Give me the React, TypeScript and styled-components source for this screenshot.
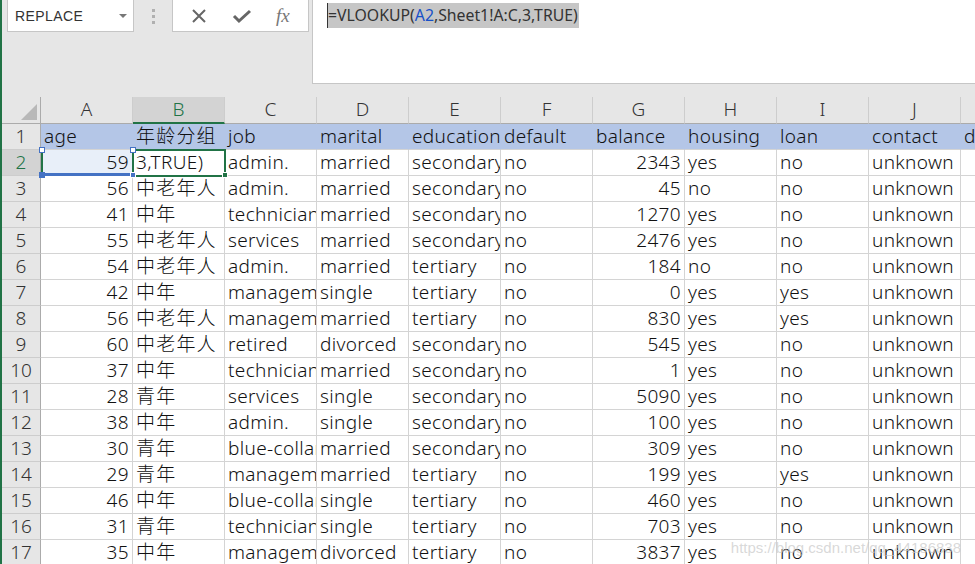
import React from 'react';
import styled, { createGlobalStyle } from 'styled-components';

const GlobalStyle = createGlobalStyle`
  html, body {
    margin: 0;
    padding: 0;
    background: #ffffff;
    overflow: hidden;
  }
  * {
    box-sizing: border-box;
  }
`;

const Frame = styled.div`
  width: 975px;
  height: 564px;
  border-left: 2px solid #217346;
  background: #e6e6e6;
  display: flex;
  flex-direction: column;
  overflow: hidden;
  position: relative;
  font-family: "Noto Sans", "Noto Sans CJK SC", sans-serif;
`;

const TopBar = styled.div`
  display: flex;
  align-items: flex-start;
  height: 97px;
  flex-shrink: 0;
`;

const NameBox = styled.div`
  margin-left: 5px;
  width: 127px;
  height: 32px;
  background: #fff;
  border: 1px solid #c6c6c6;
  border-top: none;
  display: flex;
  align-items: center;
  justify-content: space-between;
  padding: 0 6px 0 7px;
  font-family: "Liberation Sans", sans-serif;
  font-size: 14px;
  letter-spacing: 0.4px;
  color: #333;
`;

const DropArrow = styled.span`
  width: 0;
  height: 0;
  border-left: 4px solid transparent;
  border-right: 4px solid transparent;
  border-top: 4px solid #777;
`;

const Grip = styled.div`
  width: 38px;
  height: 32px;
  display: flex;
  flex-direction: column;
  align-items: center;
  justify-content: center;
  gap: 3px;
  span {
    width: 3px;
    height: 3px;
    background: #b0b0b0;
  }
`;

const FxBox = styled.div`
  width: 137px;
  height: 32px;
  background: #fff;
  border: 1px solid #c6c6c6;
  border-top: none;
  display: flex;
  align-items: center;
  justify-content: space-around;
  padding: 0 6px;
  color: #666;
`;

const FxLabel = styled.span`
  font-family: "Liberation Serif", serif;
  font-style: italic;
  font-size: 19px;
  color: #777;
`;

const FormulaBar = styled.div`
  margin-left: 3px;
  flex: 1;
  height: 84px;
  background: #fff;
  border-left: 1px solid #c6c6c6;
  border-bottom: 1px solid #c6c6c6;
  padding: 3px 0 0 14px;
`;

const FormulaText = styled.span`
  display: inline-block;
  height: 25px;
  line-height: 25px;
  background: #c6c6c6;
  border-left: 1px solid #333;
  padding-right: 1px;
  font-size: 15.8px;
  color: #333;
  white-space: nowrap;
`;

const RefText = styled.span`
  color: #1650c8;
`;

const Sheet = styled.div`
  position: relative;
  display: grid;
  grid-template-columns: 39px repeat(11, 92px);
  grid-template-rows: 27px;
  grid-auto-rows: 26px;
  background: #fff;
`;

const Corner = styled.div`
  position: relative;
  background: #e6e6e6;
  border-right: 1px solid #ababab;
  border-bottom: 1px solid #ababab;
  &::after {
    content: '';
    position: absolute;
    right: 3px;
    bottom: 3px;
    width: 0;
    height: 0;
    border-left: 16px solid transparent;
    border-bottom: 16px solid #b8b8b8;
  }
`;

const ColHead = styled.div<{ $active?: boolean }>`
  background: ${p => (p.$active ? '#d3d3d3' : '#e6e6e6')};
  border-right: 1px solid #cdcdcd;
  border-bottom: ${p => (p.$active ? '2px solid #217346' : '1px solid #ababab')};
  color: ${p => (p.$active ? '#217346' : '#333')};
  font-size: 19px;
  font-weight: 300;
  display: flex;
  align-items: center;
  justify-content: center;
  line-height: 1;
  padding-bottom: ${p => (p.$active ? '0' : '1px')};
`;

const RowHead = styled.div<{ $active?: boolean }>`
  background: ${p => (p.$active ? '#d3d3d3' : '#e6e6e6')};
  border-right: 1px solid #ababab;
  border-bottom: 1px solid #cdcdcd;
  color: ${p => (p.$active ? '#217346' : '#333')};
  font-size: 19px;
  font-weight: 300;
  display: flex;
  align-items: center;
  justify-content: center;
  line-height: 1;
`;

const Cell = styled.div<{ $header?: boolean; $num?: boolean; $cjk?: boolean; $ref?: boolean }>`
  background: ${p => (p.$header ? '#b4c6e7' : p.$ref ? '#e8eff9' : '#fff')};
  border-right: 1px solid ${p => (p.$header ? '#b4c6e7' : '#d4d4d4')};
  border-bottom: 1px solid #d4d4d4;
  font-size: 19px;
  font-weight: 300;
  letter-spacing: ${p => (p.$cjk ? '1.2px' : '0.35px')};
  color: #111;
  white-space: nowrap;
  overflow: hidden;
  text-overflow: clip;
  display: flex;
  align-items: center;
  justify-content: ${p => (p.$num ? 'flex-end' : 'flex-start')};
  padding: 0 3px 0 3px;
  line-height: 1;
`;

const ActiveBox = styled.div`
  position: absolute;
  left: 130px;
  top: 52px;
  width: 94px;
  height: 28px;
  border: 2px solid #217346;
  pointer-events: none;
`;

const RefBox = styled.div`
  position: absolute;
  left: 39px;
  top: 53px;
  width: 93px;
  height: 26px;
  border-left: 2px solid #217346;
  border-bottom: 3px solid #4472c4;
  pointer-events: none;
`;

const Handle = styled.span<{ $x: number; $y: number; $fill: string; $line: string }>`
  position: absolute;
  left: ${p => p.$x}px;
  top: ${p => p.$y}px;
  width: 6px;
  height: 6px;
  background: ${p => p.$fill};
  border: 1px solid ${p => p.$line};
  pointer-events: none;
`;

const Watermark = styled.div`
  position: absolute;
  right: 14px;
  bottom: 8px;
  font-family: "Liberation Sans", sans-serif;
  font-size: 15px;
  color: rgba(200, 200, 200, 0.7);
  pointer-events: none;
  white-space: nowrap;
`;

const cols = ['A', 'B', 'C', 'D', 'E', 'F', 'G', 'H', 'I', 'J', 'K'];
const header = ['age', '年龄分组', 'job', 'marital', 'education', 'default', 'balance', 'housing', 'loan', 'contact', 'day'];

const rows: (string | number)[][] = [
  [59, '3,TRUE)', 'admin.', 'married', 'secondary', 'no', 2343, 'yes', 'no', 'unknown'],
  [56, '中老年人', 'admin.', 'married', 'secondary', 'no', 45, 'no', 'no', 'unknown'],
  [41, '中年', 'technician', 'married', 'secondary', 'no', 1270, 'yes', 'no', 'unknown'],
  [55, '中老年人', 'services', 'married', 'secondary', 'no', 2476, 'yes', 'no', 'unknown'],
  [54, '中老年人', 'admin.', 'married', 'tertiary', 'no', 184, 'no', 'no', 'unknown'],
  [42, '中年', 'management', 'single', 'tertiary', 'no', 0, 'yes', 'yes', 'unknown'],
  [56, '中老年人', 'management', 'married', 'tertiary', 'no', 830, 'yes', 'yes', 'unknown'],
  [60, '中老年人', 'retired', 'divorced', 'secondary', 'no', 545, 'yes', 'no', 'unknown'],
  [37, '中年', 'technician', 'married', 'secondary', 'no', 1, 'yes', 'no', 'unknown'],
  [28, '青年', 'services', 'single', 'secondary', 'no', 5090, 'yes', 'no', 'unknown'],
  [38, '中年', 'admin.', 'single', 'secondary', 'no', 100, 'yes', 'no', 'unknown'],
  [30, '青年', 'blue-collar', 'married', 'secondary', 'no', 309, 'yes', 'no', 'unknown'],
  [29, '青年', 'management', 'married', 'tertiary', 'no', 199, 'yes', 'yes', 'unknown'],
  [46, '中年', 'blue-collar', 'single', 'tertiary', 'no', 460, 'yes', 'no', 'unknown'],
  [31, '青年', 'technician', 'single', 'tertiary', 'no', 703, 'yes', 'no', 'unknown'],
  [35, '中年', 'management', 'divorced', 'tertiary', 'no', 3837, 'yes', 'no', 'unknown'],
];

const dayValues = [5, 5, 5, 5, 5, 5, 5, 5, 5, 5, 5, 5, 5, 5, 5, 5];

export default function App() {
  return (
    <>
      <GlobalStyle />
      <Frame>
        <TopBar>
          <NameBox>
            REPLACE
            <DropArrow />
          </NameBox>
          <Grip>
            <span />
            <span />
            <span />
          </Grip>
          <FxBox>
            <svg width="16" height="16" viewBox="0 0 16 16">
              <path d="M2 2 L14 14 M14 2 L2 14" stroke="#666" strokeWidth="2" fill="none" />
            </svg>
            <svg width="20" height="16" viewBox="0 0 20 16">
              <path d="M2 8 L7 13 L18 3" stroke="#666" strokeWidth="3" fill="none" />
            </svg>
            <FxLabel>fx</FxLabel>
          </FxBox>
          <FormulaBar>
            <FormulaText>
              =VLOOKUP(<RefText>A2</RefText>,Sheet1!A:C,3,TRUE)
            </FormulaText>
          </FormulaBar>
        </TopBar>

        <Sheet>
          <Corner />
          {cols.map(c => (
            <ColHead key={c} $active={c === 'B'}>
              {c}
            </ColHead>
          ))}

          <RowHead>1</RowHead>
          {header.map(h => (
            <Cell key={h} $header $cjk={h === '年龄分组'}>
              {h}
            </Cell>
          ))}

          {rows.map((r, i) => (
            <React.Fragment key={i}>
              <RowHead $active={i === 0}>{i + 2}</RowHead>
              {r.map((v, j) => (
                <Cell
                  key={j}
                  $num={typeof v === 'number'}
                  $cjk={j === 1 && i > 0}
                  $ref={i === 0 && j === 0}
                >
                  {v}
                </Cell>
              ))}
              <Cell $num>{dayValues[i]}</Cell>
            </React.Fragment>
          ))}

          <RefBox />
          <ActiveBox />
          <Handle $x={37} $y={50} $fill="#fff" $line="#4472c4" />
          <Handle $x={128} $y={50} $fill="#fff" $line="#4472c4" />
          <Handle $x={37} $y={75} $fill="#4472c4" $line="#4472c4" />
          <Handle $x={128} $y={75} $fill="#4472c4" $line="#fff" />
          <Handle $x={220} $y={75} $fill="#217346" $line="#fff" />
        </Sheet>

        <Watermark>https://blog.csdn.net/qq_44186838</Watermark>
      </Frame>
    </>
  );
}
